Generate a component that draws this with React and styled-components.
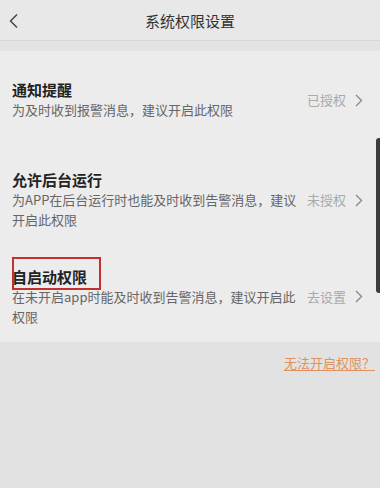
import React from "react";
import styled, { createGlobalStyle } from "styled-components";

const Global = createGlobalStyle`
  html, body { margin: 0; padding: 0; }
  body {
    width: 380px; height: 488px; overflow: hidden;
    background: #e2e2e2;
    font-family: "Noto Sans CJK SC", "Noto Sans", sans-serif;
  }
`;

const Page = styled.div`
  position: relative;
  width: 380px;
  height: 488px;
  background: #e2e2e2;
  display: flex;
  flex-direction: column;
`;

const Header = styled.div`
  height: 40px;
  background: #e8e8e8;
  border-bottom: 1px solid #d7d7d7;
  display: flex;
  align-items: center;
  justify-content: center;
  position: relative;
`;

const BackBtn = styled.div`
  position: absolute;
  left: 8px;
  top: 13px;
  width: 12px;
  height: 16px;
  display: flex;
`;

const Title = styled.div`
  font-size: 15px;
  color: #333;
  line-height: 20px;
  margin-top: 1px;
`;

const Band = styled.div`
  height: 10px;
  background: #e3e3e3;
`;

const List = styled.div`
  background: #ececec;
  display: flex;
  flex-direction: column;
`;

const Row = styled.div`
  height: ${(p) => p.$h}px;
  display: flex;
  align-items: center;
  padding: 0 12px;
  position: relative;
`;

const TextCol = styled.div`
  width: 292px;
  display: flex;
  flex-direction: column;
`;

const ItemTitle = styled.div`
  font-size: 15px;
  font-weight: 700;
  color: #222;
  line-height: 20px;
`;

const ItemDesc = styled.div`
  font-size: 13px;
  color: #666;
  line-height: 20px;
`;

const Status = styled.div`
  margin-left: auto;
  display: flex;
  align-items: center;
  gap: 9px;
  font-size: 13px;
  color: #a9a9a9;
  line-height: 20px;
  margin-right: 5px;
`;

const Highlight = styled.div`
  position: absolute;
  left: 12px;
  top: ${(p) => p.$top}px;
  width: 85px;
  height: 29px;
  border: 2px solid #c4302e;
`;

const Footer = styled.div`
  display: flex;
  justify-content: flex-end;
  padding: 11px 5px 0 0;
`;

const Link = styled.a`
  font-size: 13px;
  line-height: 20px;
  color: #e2905f;
  text-decoration: underline;
  text-underline-offset: 2px;
`;

const ScrollBar = styled.div`
  position: absolute;
  right: 0;
  top: 138px;
  width: 4px;
  height: 155px;
  background: #3c3c3c;
  border-radius: 3px 0 0 3px;
`;

const Chevron = () => (
  <svg width="8" height="13" viewBox="0 0 8 13">
    <path d="M1 1 L6.5 6.5 L1 12" fill="none" stroke="#8a8a8a" strokeWidth="1.4" />
  </svg>
);

const items = [
  { title: "通知提醒", desc: "为及时收到报警消息，建议开启此权限", status: "已授权", h: 98 },
  { title: "允许后台运行", desc: "为APP在后台运行时也能及时收到告警消息，建议开启此权限", status: "未授权", h: 102 },
  { title: "自启动权限", desc: "在未开启app时能及时收到告警消息，建议开启此权限", status: "去设置", h: 91, mark: true },
];

export default function App() {
  return (
    <Page>
      <Global />
      <Header>
        <BackBtn>
          <svg width="12" height="16" viewBox="0 0 12 16">
            <path d="M9 1.5 L2.5 8 L9 14.5" fill="none" stroke="#444" strokeWidth="1.5" />
          </svg>
        </BackBtn>
        <Title>系统权限设置</Title>
      </Header>
      <Band />
      <List>
        {items.map((it) => (
          <Row key={it.title} $h={it.h}>
            <TextCol>
              <ItemTitle>{it.title}</ItemTitle>
              <ItemDesc>{it.desc}</ItemDesc>
            </TextCol>
            <Status>
              {it.status}
              <Chevron />
            </Status>
            {it.mark && <Highlight $top={6} />}
          </Row>
        ))}
      </List>
      <Footer>
        <Link>无法开启权限？</Link>
      </Footer>
      <ScrollBar />
    </Page>
  );
}
